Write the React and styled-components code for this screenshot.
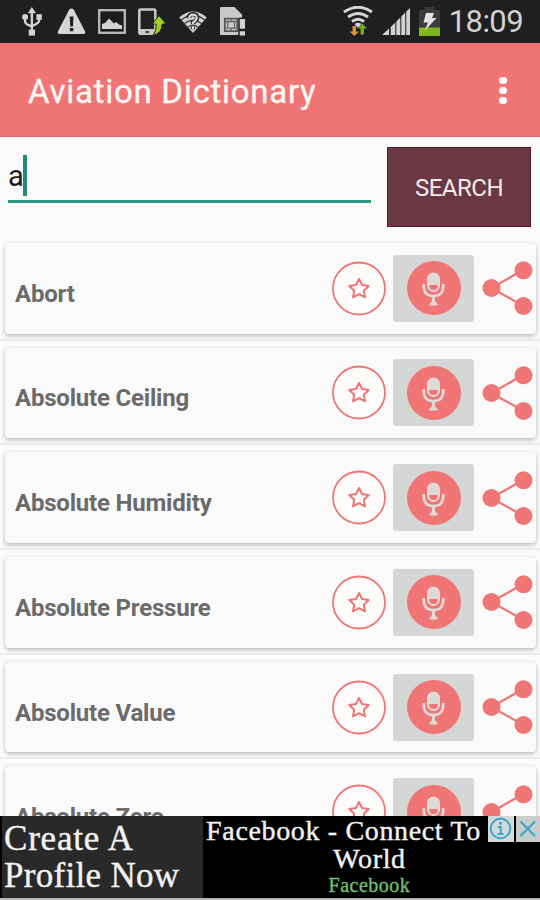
import React, { useState } from 'react';
import styled, { createGlobalStyle } from 'styled-components';

const CORAL = '#f07575';

const GlobalStyle = createGlobalStyle`
  * {
    box-sizing: border-box;
  }

  body {
    margin: 0;
    background: #fafafa;
    font-family: Roboto, "Liberation Sans", sans-serif;
  }
`;

const Screen = styled.div`
  display: flex;
  flex-direction: column;
  width: 540px;
  height: 900px;
  overflow: hidden;
  background: #fafafa;
`;

const StatusBar = styled.header`
  flex: none;
  display: flex;
  align-items: center;
  justify-content: space-between;
  height: 43px;
  padding: 0 17px 0 21px;
  background: #1f1f1f;
`;

const StatusGroup = styled.div`
  display: flex;
  align-items: center;
  gap: ${props => props.$gap}px;
  height: 43px;

  svg {
    display: block;
  }
`;

const Clock = styled.span`
  color: #d2d2d2;
  font-size: 31px;
  letter-spacing: -0.6px;
  line-height: 42px;
`;

const Toolbar = styled.div`
  flex: none;
  display: flex;
  align-items: center;
  justify-content: space-between;
  height: 94px;
  padding: 0 28px;
  background: ${CORAL};
  border-bottom: 1px solid #e66e70;
`;

const Title = styled.h1`
  margin: 5px 0 0;
  color: #fff8f5;
  font-size: 33px;
  font-weight: 400;
  letter-spacing: 0.73px;
  line-height: 40px;
  -webkit-text-stroke: 0.3px #fff8f5;
`;

const MenuButton = styled.button`
  display: flex;
  flex-direction: column;
  align-items: center;
  gap: 2.800px;
  width: 18px;
  margin-top: 2px;
  padding: 0;
  border: 0;
  background: none;
`;

const Dot = styled.span`
  width: 7.4px;
  height: 7.4px;
  border-radius: 50%;
  background: #fffdfb;
`;

const SearchRow = styled.form`
  flex: none;
  display: flex;
  height: 99px;
  padding: 10px 9px 0 8px;
`;

const Field = styled.div`
  display: flex;
  align-items: center;
  width: 363px;
  height: 56px;
  margin-right: 16px;
  border-bottom: 3px solid #2f9a84;
`;

const Query = styled.span`
  margin-top: 5px;
  color: #1c1c1c;
  font-size: 29px;
  letter-spacing: -0.8px;
  line-height: 40px;
`;

const Caret = styled.span`
  width: 4px;
  height: 41px;
  margin-top: 3px;
  background: #1f8a76;
`;

const SearchButton = styled.button`
  width: 144px;
  height: 80px;
  padding: 2px 0 0;
  border: 1px solid #571c30;
  background: #693842;
  color: #f5ebeb;
  font-family: inherit;
  font-size: 24px;
  letter-spacing: -0.5px;
`;

const List = styled.main`
  flex: 1;
  min-height: 0;
  overflow: hidden;
`;

const Row = styled.div`
  height: 104.7px;
  padding: 7px 4px 0 5px;
  border-bottom: 2px solid #ececec;
`;

const Card = styled.div`
  display: flex;
  align-items: center;
  height: 90.5px;
  padding-left: 10px;
  border-radius: 4px;
  background: #fafafa;
  box-shadow: 0 2px 4px rgba(0, 0, 0, 0.24), 0 0 2px rgba(0, 0, 0, 0.08);

  svg {
    display: block;
  }
`;

const Term = styled.span`
  flex: 1;
  margin-top: 11px;
  color: #6b6b6b;
  font-size: 24px;
  font-weight: 700;
  letter-spacing: -0.2px;
`;

const MicButton = styled.button`
  display: flex;
  align-items: center;
  justify-content: center;
  width: 81px;
  height: 67px;
  margin: 0 8px 0 7px;
  padding: 0;
  border: 0;
  border-radius: 3px;
  background: #d5d7d6;
`;

const AdBanner = styled.footer`
  flex: none;
  position: relative;
  display: flex;
  height: 84px;
  padding-left: 2px;
  border-bottom: 2px solid #b9b9b9;
  background: #000;
  color: #f2f2f2;
  font-family: "Liberation Serif", serif;
  -webkit-text-stroke-width: 0.4px;
`;

const AdHeadline = styled.div`
  width: 201px;
  padding: 4px 0 0 2px;
  background: #292929;
  font-size: 35px;
  line-height: 37px;
  white-space: nowrap;
`;

const HeadlineLine = styled.div`
  letter-spacing: ${props => props.$spacing}px;
`;

const AdBody = styled.div`
  flex: 1;
  display: flex;
  flex-direction: column;
  align-items: center;
  white-space: nowrap;
`;

const AdTitle = styled.div`
  width: 334px;
  padding-top: 1px;
  text-align: center;
  font-size: 28px;
  line-height: 28px;
  letter-spacing: 0.65px;
`;

const AdTitleLine = styled.div`
  padding-right: ${props => props.$shift}px;
`;

const Advertiser = styled.div`
  margin-top: 1px;
  padding-right: 4px;
  color: #6fbd72;
  font-size: 20px;
  line-height: 22px;
  letter-spacing: 0.5px;
`;

const AdControls = styled.div`
  position: absolute;
  top: 0;
  right: 0;
  display: flex;
  gap: 2px;

  svg {
    display: block;
  }
`;

const UsbIcon = () => (
  <svg width="24" height="29" viewBox="0 0 24 32" preserveAspectRatio="xMinYMid meet" fill="none" stroke="#d3d3d3" strokeWidth="2.600">
    <path d="M12 6v20M4.500 12v4q0 3 7.500 5.500M20 10v5q0 3-8 6" />
    <path d="M12 0l4.500 7h-9zM17 8h6v6h-6z" fill="#d3d3d3" stroke="none" />
    <circle cx="4.500" cy="11" r="3.300" fill="#d3d3d3" stroke="none" />
    <path d="M8.500 25h7v6.500h-7z" fill="#d3d3d3" stroke="none" />
  </svg>
);

const WarningIcon = () => (
  <svg width="29" height="27" viewBox="0 0 31 29">
    <path d="M13 2q2.500-3 5 0l12 23q1 3-2 3H3q-3 0-2-3z" fill="#d6d6d6" />
    <path d="M13.500 9h4.200l-.7 11h-2.800zM13.700 21.500h3.800v3.500h-3.800z" fill="#222" />
  </svg>
);

const GalleryIcon = () => (
  <svg width="28" height="25" viewBox="0 0 28 25">
    <rect x="1.200" y="1.200" width="25.600" height="22.600" fill="#1c1c1c" stroke="#b5b5b5" strokeWidth="2.400" />
    <path d="M4 20v-5l3-1 4-4.500 5 5 2-1.500 3 2.500 3 1v3.500z" fill="#d3d3d3" />
  </svg>
);

const TransferIcon = () => (
  <svg width="28" height="28" viewBox="0 0 28 28">
    <rect x="1.300" y="1.500" width="16" height="24" rx="1" fill="#222" stroke="#c6c6c6" strokeWidth="2.600" />
    <path d="M1 21h17v6H1z" fill="#c6c6c6" />
    <path d="M7.500 23h3.500v2H7.500z" fill="#444" />
    <path d="M21 7.500l7.200 8.500h-4q0 9.500-9.700 11.500 4-4 3.500-11.500h-4z" fill="#9fd112" stroke="#1f1f1f" strokeWidth="1" />
  </svg>
);

const WifiUnknownIcon = () => (
  <svg width="30" height="22" viewBox="0 0 30 24">
    <path d="M0 7Q15-6 30 7L15 24z" fill="#d0d0d0" />
    <path d="M2 10q13-11 26 0M5 14q10-8 20 0M9 18q6-5 12 0" fill="none" stroke="#242424" strokeWidth="1.100" />
    <path d="M10.500 8q0-4.500 4.500-4.500t4.500 4q0 2.500-4.500 5v2M15 17v3" fill="none" stroke="#242424" strokeWidth="4.600" />
    <path d="M10.800 8.500q0-4.500 4.200-4.500t4 3.500q0 2.500-4 5v2M15 17v3" fill="none" stroke="#d8d8d8" strokeWidth="2.400" />
  </svg>
);

const SimAlertIcon = () => (
  <svg width="26" height="29" viewBox="0 0 27 30">
    <path d="M0 1q0-1 1-1h14l8 8v21H1q-1 0-1-1z" fill="#c9c9c9" />
    <path d="M5 12h13v13H5z" fill="none" stroke="#555" strokeWidth="1.800" />
    <path d="M8 15h7v7H8zM5 15h3M5 22h3M15 15h3M15 22h3M11.500 12v3M11.500 22v3" fill="none" stroke="#666" strokeWidth="1.300" />
    <path d="M19 11h8v19h-8z" fill="#1f1f1f" />
    <path d="M20.500 12.500h5.500v10h-5.500zM20.500 25h5.500v4.500h-5.500z" fill="#d3d3d3" />
  </svg>
);

const WifiIcon = () => (
  <svg width="30" height="31" viewBox="0 0 30 31" fill="none" stroke="#d6d6d6" strokeWidth="3">
    <path d="M1 6q14-9.500 28 0M5 11q10-7 20 0M9 15.500q6-4.500 12 0" />
    <path d="M11.500 18q3.500-2.500 7 0L15 22z" fill="#d6d6d6" stroke="none" />
    <path d="M9.500 20h3.500v5.500h3l-4.700 4.500-4.800-4.500h3z" fill="#dd9438" stroke="none" />
    <path d="M17.500 28.500v-6h-2.500l4.500-5 4.500 5h-3v6z" fill="#79a820" stroke="none" />
  </svg>
);

const SignalIcon = () => (
  <svg width="28" height="28" viewBox="0 0 28 28" fill="#d2d2d2">
    <path d="M0 27l7-6.500v6.500zM8.700 19l4.600-4.500v12.500H8.700zM14.300 13.500l4-4V27h-4zM19.300 8.500l4-4V27h-4zM24.300 3.500L28 0v27h-3.700z" />
  </svg>
);

const BatteryIcon = () => (
  <svg width="21" height="29" viewBox="0 0 21 29">
    <path d="M6 0h9v3h6v26H0V3h6z" fill="#3b3b3b" />
    <path d="M0 20.500h21V29H0z" fill="#7fb51a" />
    <path d="M7 6h8l-2 5h4.500L5.500 24l3.500-8.500H4.500z" fill="#e2e2e2" />
  </svg>
);

const StarIcon = () => (
  <svg width="54" height="55" viewBox="0 0 54 55" fill="none" stroke={CORAL}>
    <circle cx="27" cy="27.500" r="26" fill="#fdfcfb" strokeWidth="1.800" />
    <path
      d="M27 18l3 6 6.700 1-4.900 4.700 1.200 6.700-6-3.200-6 3.200 1.200-6.700-4.900-4.700 6.700-1z"
      strokeWidth="2"
      strokeLinejoin="round"
    />
  </svg>
);

const MicIcon = () => (
  <svg width="54" height="54" viewBox="0 0 54 54">
    <circle cx="27" cy="27" r="27" fill={CORAL} />
    <rect x="20" y="11.500" width="13" height="19.500" rx="6.500" fill="#dedad8" />
    <path d="M22.300 24h8.400v1q0 4-4.200 4t-4.200-4z" fill={CORAL} />
    <path d="M16.800 23v2.500q0 9.500 9.700 9.500t9.700-9.500V23" fill="none" stroke="#dedad8" strokeWidth="2.600" />
    <path d="M25 35h3v5l2.500 3v1.500h-8V43l2.500-3z" fill="#dedad8" />
  </svg>
);

const ShareIcon = () => (
  <svg width="54" height="56" viewBox="0 0 54 56" fill={CORAL}>
    <path d="M41.500 9.800L9.500 28l32 18" fill="none" stroke={CORAL} strokeWidth="2.200" />
    <circle cx="9.500" cy="28" r="9" />
    <circle cx="41.500" cy="10.300" r="9" />
    <circle cx="41.500" cy="46" r="9" />
  </svg>
);

const AdInfoIcon = () => (
  <svg width="26" height="26" viewBox="0 0 26 26" fill="none" stroke="#2fa9c9">
    <path d="M0 0h26v26H0z" fill="#d4d8d8" stroke="none" />
    <circle cx="12.500" cy="12.500" r="9.800" strokeWidth="1.800" />
    <path d="M10 11h2.700v7M9.500 18h6" strokeWidth="1.800" />
    <circle cx="12.500" cy="7.200" r="1.500" fill="#2fa9c9" stroke="none" />
  </svg>
);

const AdCloseIcon = () => (
  <svg width="24" height="26" viewBox="0 0 24 26">
    <path d="M0 0h24v26H0z" fill="#cbcdcd" />
    <path d="M4.500 5.500l14.500 14.500M19 5.500L4.500 20" fill="none" stroke="#35a9c9" strokeWidth="2.200" />
  </svg>
);

const terms = [
  'Abort',
  'Absolute Ceiling',
  'Absolute Humidity',
  'Absolute Pressure',
  'Absolute Value',
  'Absolute Zero',
];

const App = () => {
  const [query] = useState('a');

  return (
    <Screen>
      <GlobalStyle />
      <StatusBar>
        <StatusGroup $gap={12}>
          <UsbIcon />
          <WarningIcon />
          <GalleryIcon />
          <TransferIcon />
          <WifiUnknownIcon />
          <SimAlertIcon />
        </StatusGroup>
        <StatusGroup $gap={9}>
          <WifiIcon />
          <SignalIcon />
          <BatteryIcon />
          <Clock>18:09</Clock>
        </StatusGroup>
      </StatusBar>

      <Toolbar>
        <Title>Aviation Dictionary</Title>
        <MenuButton aria-label="More options">
          <Dot />
          <Dot />
          <Dot />
        </MenuButton>
      </Toolbar>

      <SearchRow onSubmit={(e) => e.preventDefault()}>
        <Field>
          <Query>{query}</Query>
          <Caret />
        </Field>
        <SearchButton>SEARCH</SearchButton>
      </SearchRow>

      {/* Matching terms */}
      <List>
        {terms.map((term) => (
          <Row key={term}>
            <Card>
              <Term>{term}</Term>
              <StarIcon />
              <MicButton aria-label={`Pronounce ${term}`}>
                <MicIcon />
              </MicButton>
              <ShareIcon />
            </Card>
          </Row>
        ))}
      </List>

      <AdBanner>
        <AdHeadline>
          <HeadlineLine $spacing={0.8}>Create A</HeadlineLine>
          <HeadlineLine $spacing={0.3}>Profile Now</HeadlineLine>
        </AdHeadline>
        <AdBody>
          <AdTitle>
            <AdTitleLine $shift={56}>Facebook - Connect To</AdTitleLine>
            <AdTitleLine $shift={4}>World</AdTitleLine>
          </AdTitle>
          <Advertiser>Facebook</Advertiser>
        </AdBody>
        <AdControls>
          <AdInfoIcon />
          <AdCloseIcon />
        </AdControls>
      </AdBanner>
    </Screen>
  );
};

export default App;
